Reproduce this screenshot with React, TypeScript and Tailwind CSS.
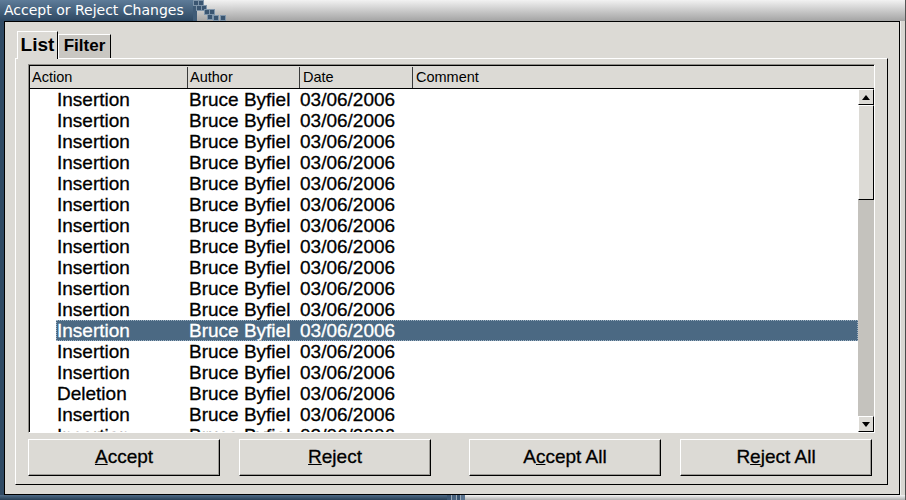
import React from 'react';

const rows = [
  'Insertion', 'Insertion', 'Insertion', 'Insertion', 'Insertion', 'Insertion',
  'Insertion', 'Insertion', 'Insertion', 'Insertion', 'Insertion', 'Insertion',
  'Insertion', 'Insertion', 'Deletion', 'Insertion', 'Insertion',
];
const SELECTED = 11;

function Steps({ w, h }: { w: number; h: number }) {
  // stair-step pixel blocks where the dark caption part meets the light one
  const blocks = [
    [0, 0], [5, 0], [3, 5], [8, 5], [11, 9], [16, 9], [14, 14], [20, 15], [27, 15],
  ];
  return (
    <svg width={w} height={h} className="block shrink-0">
      <defs>
        <linearGradient id="lg" x1="0" y1="0" x2="0" y2="1">
          <stop offset="0" stopColor="#f2f2f2" />
          <stop offset="1" stopColor="#a4a4a4" />
        </linearGradient>
      </defs>
      <rect x="0" y="0" width={w} height={h} fill="url(#lg)" />
      <rect x="0" y="0" width="4" height={h} fill="#3f5b77" />
      {blocks.map(([x, y], i) => (
        <rect key={i} x={x + 0.5} y={y + 0.5} width="5" height="5" fill="#3a5571" stroke="#7f95aa" strokeWidth="1" />
      ))}
    </svg>
  );
}

function Button({ children }: { children: React.ReactNode }) {
  return (
    <div className="w-[192px] h-[37px] flex items-center justify-center bg-[#dcdad5] border-t border-l border-white border-b border-r border-b-black border-r-black shadow-[inset_-1px_-1px_0_#9d9b96] text-[19px] text-black [-webkit-text-stroke:0.3px_#000]">
      {children}
    </div>
  );
}

export default function App() {
  return (
    <div className="w-[906px] h-[500px] flex flex-col overflow-hidden bg-[#dcdad5] font-['Liberation_Sans',Arial,sans-serif]">
      {/* caption */}
      <div className="h-[21px] flex shrink-0">
        <div className="w-[193px] shrink-0 bg-gradient-to-b from-[#5e7c99] to-[#2e4862] text-white text-[14px] leading-[20px] pl-[4px] whitespace-nowrap font-['DejaVu_Sans',sans-serif]">
          Accept or Reject Changes
        </div>
        <Steps w={40} h={21} />
        <div className="flex-1 bg-gradient-to-b from-[#f2f2f2] to-[#a4a4a4] border-r border-[#555]" />
      </div>

      <div className="flex-1 flex min-h-0">
        <div className="w-[4px] bg-[#2f4a64]" />
        <div className="w-[896px] flex flex-col border border-black pt-[9px] pb-[9px] pl-[10px] pr-[11px]">
          {/* tabs */}
          <div className="h-[27px] flex items-end shrink-0">
            <div className="ml-[2px] w-[41px] h-[28px] -mb-px relative z-10 bg-[#dcdad5] border-t border-l border-white border-r border-r-black flex items-start justify-center pt-[2px] text-[19px] font-bold leading-[22px]">
              List
            </div>
            <div className="w-[53px] h-[24px] bg-[#c9c7c2] border-t border-l border-white border-r border-r-black flex items-start justify-center pt-[1px] text-[17px] font-bold leading-[20px]">
              Filter
            </div>
          </div>

          {/* tab panel */}
          <div className="flex-1 flex flex-col border-t border-l border-white border-r border-b border-r-black border-b-black pt-[5px] px-[12px] pb-[8px]">
            <div className="h-[369px] flex flex-col border-t border-l border-[#8f8d88] border-b border-r border-b-white border-r-white">
              <div className="flex-1 flex flex-col border-t border-l border-black min-h-0">
                <div className="h-[23px] flex shrink-0 border-b border-black text-[14.5px] leading-[21px] pt-[1px] text-black">
                  <div className="w-[158px] border-r border-[#3a3a3a] pl-[2px]">Action</div>
                  <div className="w-[112px] border-r border-[#3a3a3a] pl-[2px]">Author</div>
                  <div className="w-[113px] border-r border-[#3a3a3a] pl-[3px]">Date</div>
                  <div className="flex-1 pl-[3px]">Comment</div>
                </div>
                <div className="flex-1 flex min-h-0 bg-white">
                  <div className="flex-1 overflow-hidden">
                    {rows.map((a, i) => {
                      const sel = i === SELECTED;
                      return (
                        <div key={i} className="h-[21px] flex text-[19px] leading-[21px] whitespace-nowrap">
                          <div className="w-[26px] shrink-0" />
                          <div
                            className={
                              sel
                                ? 'flex-1 flex bg-[#4b6983] text-white [-webkit-text-stroke:0.3px_#fff] outline-1 outline-dotted outline-[#9fb2c3] -outline-offset-1'
                                : 'flex-1 flex text-black [-webkit-text-stroke:0.3px_#000]'
                            }
                          >
                            <div className="w-[132px] pl-[1px]">{a}</div>
                            <div className="w-[111px] pl-[1px]">Bruce Byfiel</div>
                            <div className="w-[113px] pl-[1px]">03/06/2006</div>
                          </div>
                        </div>
                      );
                    })}
                  </div>
                  {/* scrollbar */}
                  <div className="w-[16px] flex flex-col bg-[#c4c2bd]">
                    <div className="h-[16px] bg-[#dcdad5] border-t border-l border-white border-b border-r border-b-black border-r-black flex items-center justify-center">
                      <svg width="8" height="5"><path d="M4 0 L8 5 L0 5 Z" fill="#000" /></svg>
                    </div>
                    <div className="h-[95px] bg-[#dcdad5] border-t border-l border-white border-b border-r border-b-black border-r-black" />
                    <div className="flex-1" />
                    <div className="h-[16px] bg-[#dcdad5] border-t border-l border-white border-b border-r border-b-black border-r-black flex items-center justify-center">
                      <svg width="8" height="5"><path d="M0 0 L8 0 L4 5 Z" fill="#000" /></svg>
                    </div>
                  </div>
                </div>
              </div>
            </div>

            <div className="mt-[6px] flex">
              <Button><span><span className="underline">A</span>ccept</span></Button>
              <div className="ml-[19px]">
                <Button><span><span className="underline">R</span>eject</span></Button>
              </div>
              <div className="ml-[38px]">
                <Button><span>A<span className="underline">c</span>cept All</span></Button>
              </div>
              <div className="ml-[19px]">
                <Button><span>R<span className="underline">e</span>ject All</span></Button>
              </div>
            </div>
          </div>
        </div>
        <div className="w-[6px] bg-[#d8d6d1] border-l border-[#efefef] border-r border-r-[#4a4a4a]" />
      </div>

      {/* bottom frame */}
      <div className="h-[5px] flex shrink-0">
        <div className="w-[447px] bg-gradient-to-b from-[#4f6c88] to-[#273e54]" />
        <div className="w-[18px] flex gap-[1px] bg-[#9aa9b7]">
          <div className="w-[4px] bg-[#3a5571]" />
          <div className="w-[4px] bg-[#4a6480]" />
          <div className="w-[4px] bg-[#3a5571]" />
          <div className="w-[4px] bg-[#5a7490]" />
        </div>
        <div className="flex-1 bg-gradient-to-b from-[#f4f4f4] to-[#b0b0b0] border-r border-[#555]" />
      </div>
    </div>
  );
}
